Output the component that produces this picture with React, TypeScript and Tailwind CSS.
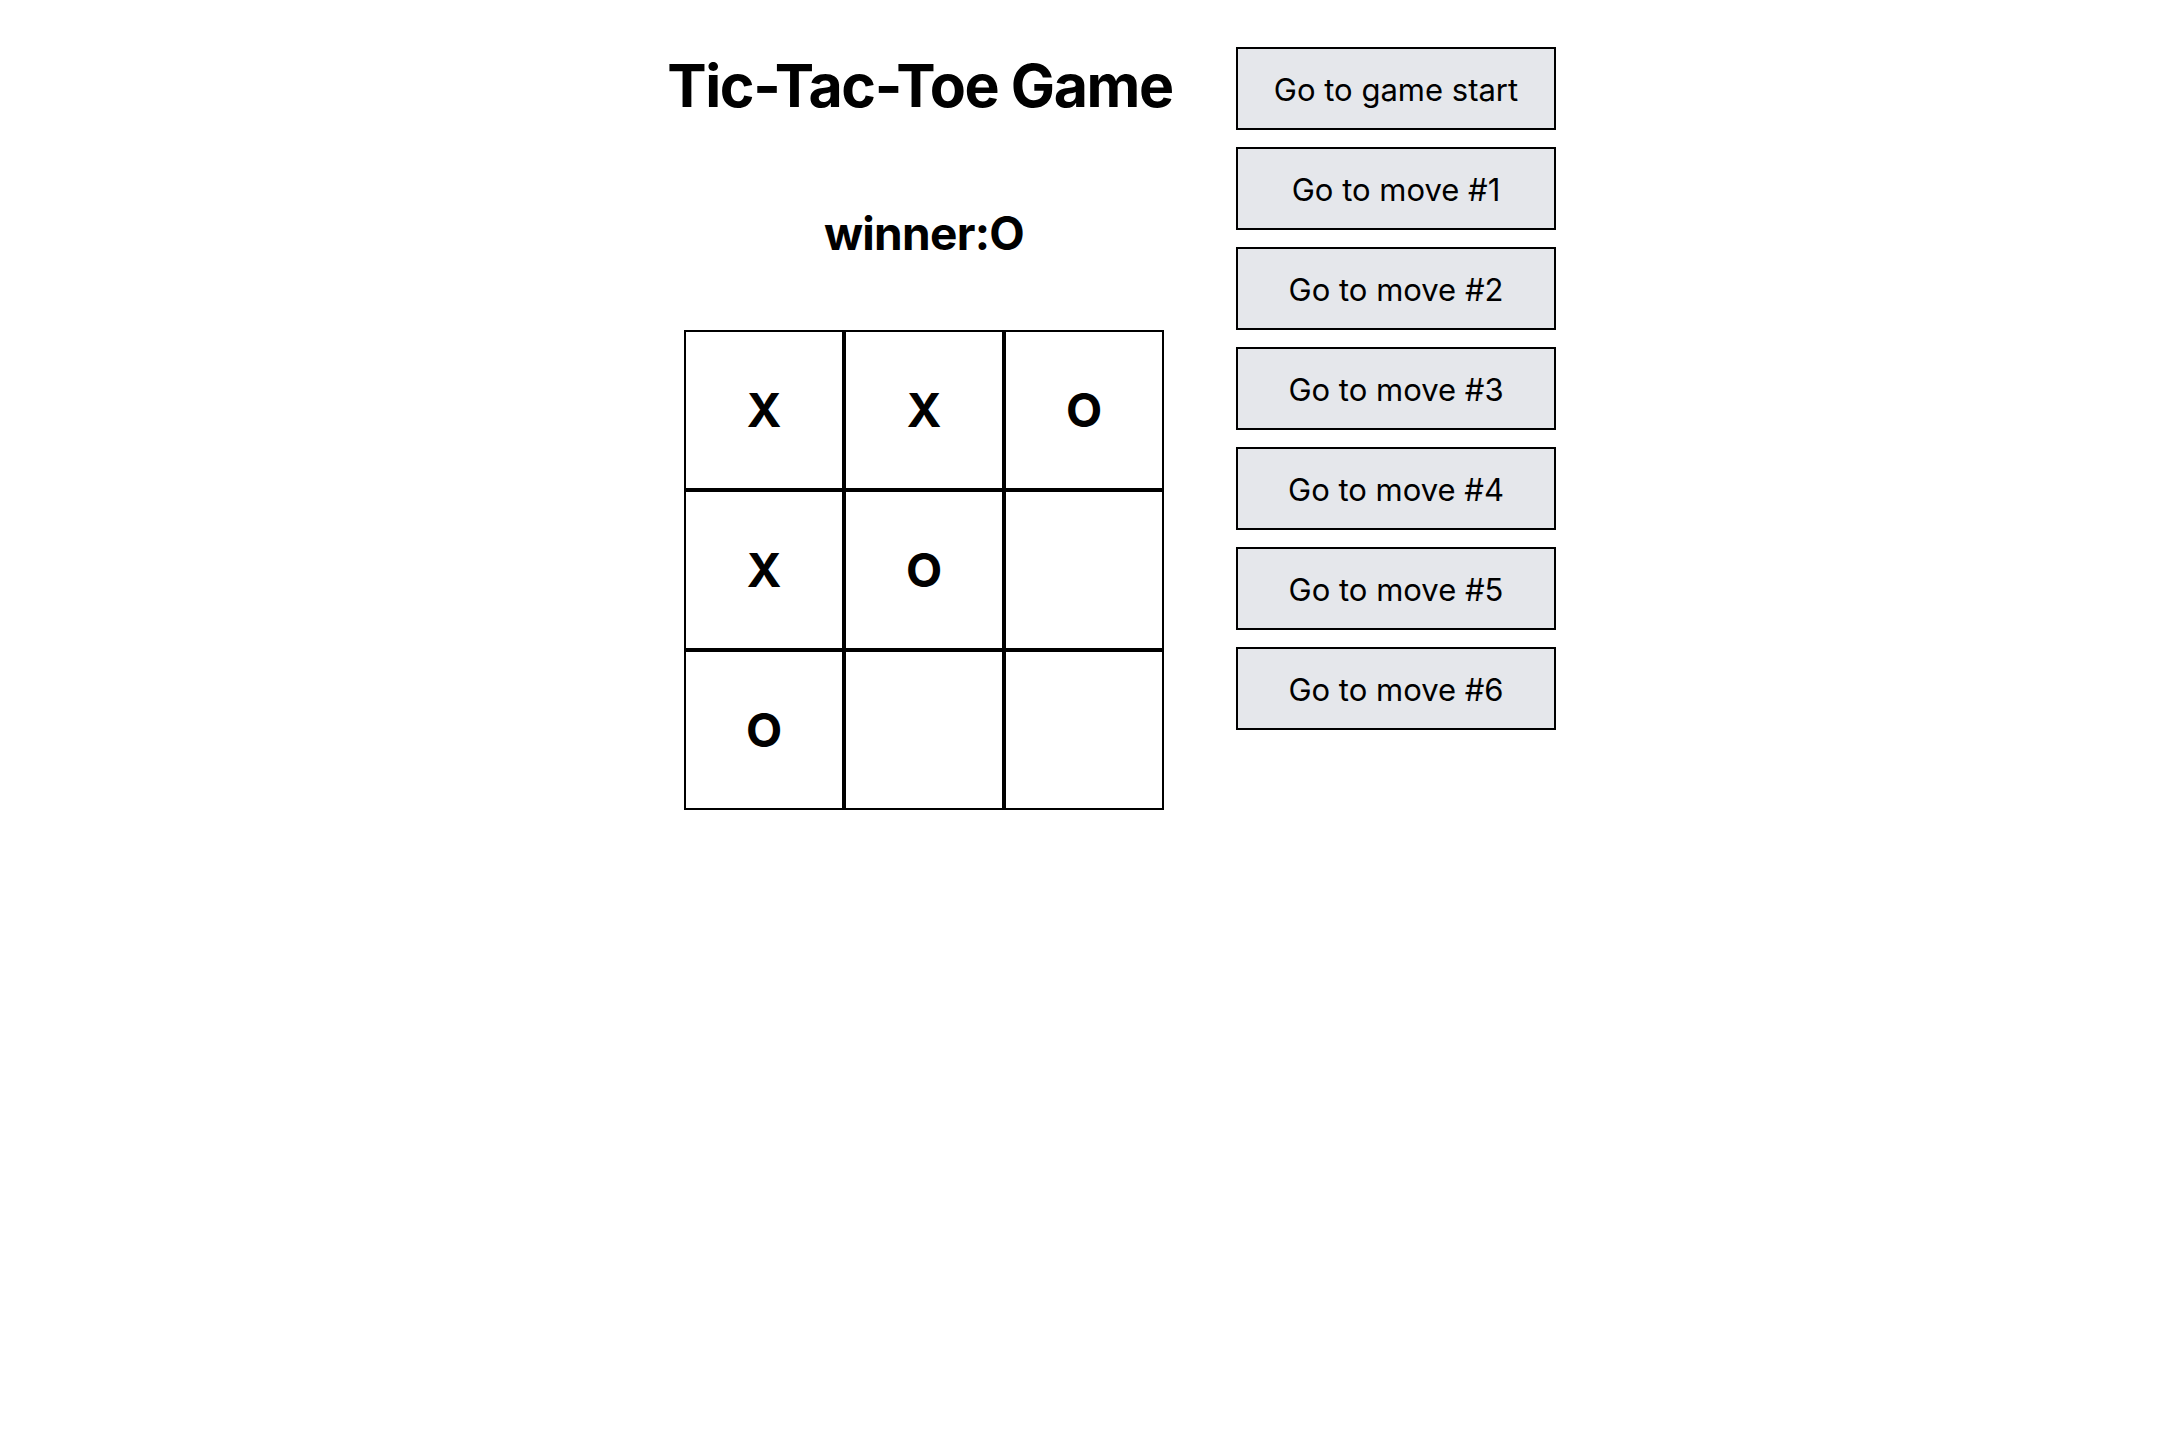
import { useState } from "react";

const BOARD = ["X", "X", "O", "X", "O", null, "O", null, null];

export default function App() {
  const [history] = useState(Array.from({ length: 7 }, (_, i) => i));

  return (
    <div className="min-h-screen bg-white text-black font-['Inter','Noto_Sans',sans-serif]">
      <div className="flex justify-center pt-[47px]">
        {/* 左側：タイトルと盤面 */}
        <div className="w-[614px] flex flex-col items-center">
          <h1 className="mt-[9px] mr-[8px] text-[59px] leading-[59px] font-bold tracking-[-1.4px] whitespace-nowrap">
            Tic-Tac-Toe Game
          </h1>
          <h2 className="mt-[95px] text-[46px] leading-[46px] font-bold tracking-[-0.7px]">winner:O</h2>
          <div className="mt-[74px] grid grid-cols-3 w-[480px]">
            {BOARD.map((v, i) => (
              <div
                key={i}
                className="w-[160px] h-[160px] border-2 border-black flex items-center justify-center text-[47px] font-bold"
              >
                {v}
              </div>
            ))}
          </div>
        </div>

        {/* 右側：履歴ボタン */}
        <div className="ml-[5px] w-[320px] flex flex-col gap-[17px]">
          {history.map((move) => (
            <button
              key={move}
              className="h-[83px] w-full border-2 border-black bg-[#e5e7eb] text-[31px] leading-none pt-[2px]"
            >
              {move === 0 ? "Go to game start" : `Go to move #${move}`}
            </button>
          ))}
        </div>
      </div>
    </div>
  );
}
